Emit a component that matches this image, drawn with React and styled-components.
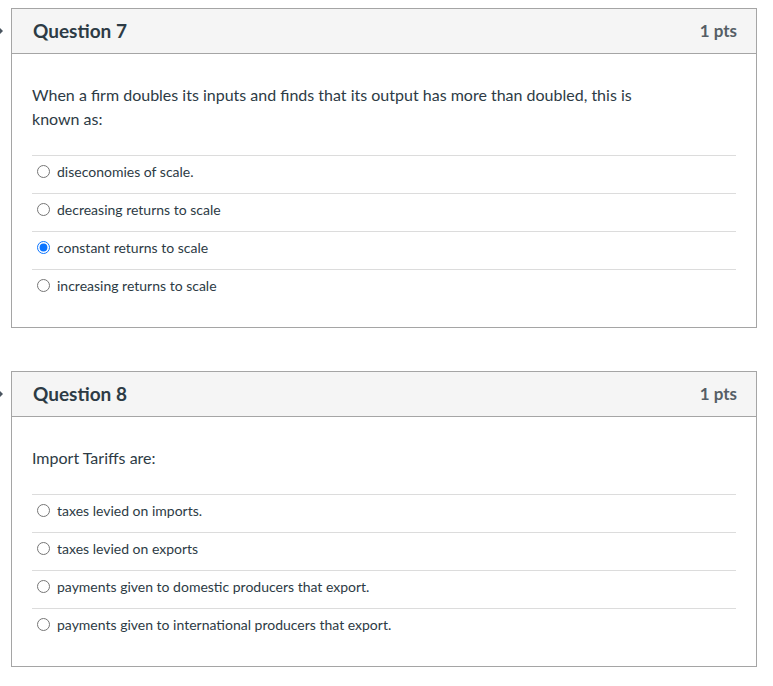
import styled, { createGlobalStyle } from "styled-components";

const GlobalStyle = createGlobalStyle`
  body {
    margin: 0;
    background: #fff;
    font-family: Lato, "Open Sans", sans-serif;
    color: #2d3b45;
  }
`;

const Page = styled.div`
  padding: 8px 16px 0 0;
  display: flex;
  flex-direction: column;
  gap: 43px;
`;

const QuestionRow = styled.div`
  display: flex;
  align-items: flex-start;
`;

const Marker = styled.div`
  width: 11px;
  flex-shrink: 0;
  padding-top: 20px;
  display: flex;
`;

const Card = styled.div`
  flex: 1;
  border: 1px solid #a5a5a5;
  background: #fff;
`;

const Header = styled.div`
  display: flex;
  justify-content: space-between;
  align-items: center;
  height: 44px;
  padding: 0 19px 0 21px;
  background: #f5f5f5;
  border-bottom: 1px solid #a5a5a5;
`;

const Title = styled.h2`
  margin: 0 0 1px 0;
  font-size: 19px;
  font-weight: 700;
  color: #2d3b45;
`;

const Points = styled.span`
  margin-bottom: 1px;
  font-size: 17px;
  font-weight: 700;
  color: #555e66;
`;

const Body = styled.div`
  padding: 29px 20px 20px 20px;
`;

const Prompt = styled.p`
  margin: 0 0 24px 0;
  font-size: 16px;
  line-height: 24px;
  color: #2d3b45;
`;

const PromptText = styled.span`
  display: block;
  max-width: 610px;
`;

const Answer = styled.label`
  box-sizing: border-box;
  display: flex;
  align-items: center;
  height: 38px;
  padding-bottom: 6px;
  border-top: 1px solid #dcdcdc;
  font-size: 14px;
  color: #2d3b45;
`;

const Radio = styled.input`
  width: 13px;
  height: 13px;
  margin: 0 7px 0 5px;
  accent-color: #0b74ff;
`;

const Caret = () => (
  <svg width="4" height="6" viewBox="0 0 4 6">
    <path d="M0 0 L3 3 L0 6 Z" fill="#4a5560" />
  </svg>
);

const questions = [
  {
    id: 7,
    prompt:
      "When a firm doubles its inputs and finds that its output has more than doubled, this is known as:",
    answers: [
      "diseconomies of scale.",
      "decreasing returns to scale",
      "constant returns to scale",
      "increasing returns to scale",
    ],
    selected: 2,
  },
  {
    id: 8,
    prompt: "Import Tariffs are:",
    answers: [
      "taxes levied on imports.",
      "taxes levied on exports",
      "payments given to domestic producers that export.",
      "payments given to international producers that export.",
    ],
    selected: -1,
  },
];

export default function App() {
  return (
    <>
      <GlobalStyle />
      <Page>
        {questions.map((q) => (
          <QuestionRow key={q.id}>
            <Marker>
              <Caret />
            </Marker>
            <Card>
              <Header>
                <Title>Question {q.id}</Title>
                <Points>1 pts</Points>
              </Header>
              <Body>
                <Prompt>
                  <PromptText>{q.prompt}</PromptText>
                </Prompt>
                {q.answers.map((a, i) => (
                  <Answer key={a}>
                    <Radio
                      type="radio"
                      name={`q${q.id}`}
                      checked={i === q.selected}
                      readOnly
                    />
                    {a}
                  </Answer>
                ))}
              </Body>
            </Card>
          </QuestionRow>
        ))}
      </Page>
    </>
  );
}
